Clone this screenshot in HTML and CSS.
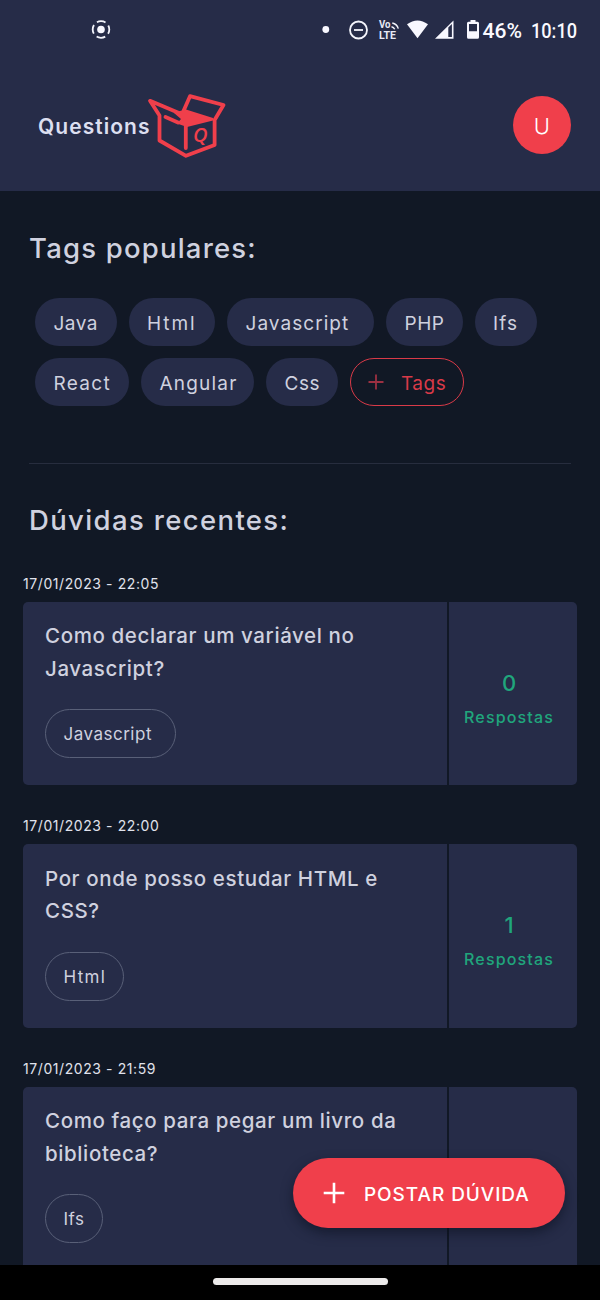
FILE: index.html
```html
<!DOCTYPE html>
<html lang="pt-BR">
<head>
<meta charset="utf-8">
<title>Questions</title>
<link rel="stylesheet" href="styles.css">
</head>
<body>
<div class="app">
  <header class="header">
    <div class="status">
      <svg class="status-icons" width="600" height="60" viewBox="0 0 600 60">
        <g fill="none" stroke="#f4f5fc" stroke-width="1.8">
          <circle cx="101" cy="29.500" r="8.300" stroke-dasharray="9 4.04" stroke-dashoffset="4.500"/>
          <circle cx="358.500" cy="30" r="8.500"/>
          <path d="M354 30h9"/>
          <path d="M391.500 26.800a4.500 4.500 0 0 1 3.200 2.500M392.300 23a8 8 0 0 1 6 5.600" stroke-width="1.400"/>
        </g>
        <g fill="#f8f8ff">
          <circle cx="101" cy="29.500" r="3.800"/>
          <circle cx="325.800" cy="29.500" r="3.400"/>
          <path d="M407 24.300Q417.500 16.500 428 24.300L417.500 38.300Z"/>
          <path fill-rule="evenodd" d="M435 38.700L453.500 20.500V38.700ZM448.300 27.500V37H451.900V24Z"/>
          <path fill-rule="evenodd" d="M470.500 20h5v1.800h2q1.500 0 1.500 1.500v14q0 1.500-1.500 1.500h-9q-1.500 0-1.500-1.500v-14q0-1.500 1.500-1.500h2ZM469 24v7.200h8V24Z"/>
        </g>
        <g class="volte">
          <text x="379" y="28" textLength="11.500" lengthAdjust="spacingAndGlyphs">Vo</text>
          <text x="379" y="38.500" textLength="17" lengthAdjust="spacingAndGlyphs">LTE</text>
        </g>
        <g class="status-text">
          <text x="482.500" y="38" textLength="39.500" lengthAdjust="spacingAndGlyphs">46%</text>
          <text x="531" y="38" textLength="46" lengthAdjust="spacingAndGlyphs">10:10</text>
        </g>
      </svg>
    </div>
    <div class="topbar">
      <div class="brand">
        <span class="brand-name">Questions</span>
        <svg class="brand-box" width="80" height="70" viewBox="146 90 80 70">
          <g fill="none" stroke="#f03f4b" stroke-width="3.800" stroke-linejoin="round" stroke-linecap="round">
            <path d="M183.500 111L190 96.200L223.500 105L214.600 120V145L186 155.800L159.500 140.500V115.500L150 100.800L179 113"/>
            <path d="M185.800 126V148M165.500 117L178 122.500"/>
          </g>
          <path fill="#f03f4b" d="M178 111.500L186 109.500L213 118V120.500L187 127L177 123.500L181 119L174 113Z"/>
          <text class="brand-q" x="193" y="141.500">Q</text>
        </svg>
      </div>
      <div class="avatar">U</div>
    </div>
  </header>

  <main class="content">
    <section class="popular">
      <h1 class="heading">Tags populares:</h1>
      <div class="tags">
        <span class="tag w-java">Java</span><span class="tag w-html">Html</span><span class="tag w-js">Javascript</span><span class="tag w-php">PHP</span><span class="tag w-ifs">Ifs</span>
        <span class="tag w-react">React</span><span class="tag w-angular">Angular</span><span class="tag w-css">Css</span>
        <span class="tag tag-more"><svg width="16" height="16" viewBox="0 0 16 16"><path d="M8 .5v15M.5 8h15"/></svg>Tags</span>
      </div>
    </section>
    <section class="recent">
      <h2 class="heading recent-heading">Dúvidas recentes:</h2>
      <article class="question">
        <time class="date">17/01/2023 - 22:05</time>
        <div class="card">
          <div class="card-main">
            <p class="title">Como declarar um variável no<br>Javascript?</p>
            <span class="chip c-js">Javascript</span>
          </div>
          <div class="card-side"><b class="count">0</b><span class="label">Respostas</span></div>
        </div>
      </article>
      <article class="question">
        <time class="date">17/01/2023 - 22:00</time>
        <div class="card">
          <div class="card-main">
            <p class="title">Por onde posso estudar HTML e<br>CSS?</p>
            <span class="chip c-html">Html</span>
          </div>
          <div class="card-side"><b class="count">1</b><span class="label">Respostas</span></div>
        </div>
      </article>
      <article class="question">
        <time class="date">17/01/2023 - 21:59</time>
        <div class="card">
          <div class="card-main">
            <p class="title">Como faço para pegar um livro da<br>biblioteca?</p>
            <span class="chip c-ifs">Ifs</span>
          </div>
          <div class="card-side"></div>
        </div>
      </article>
    </section>
  </main>
  <button class="fab"><svg width="22" height="22" viewBox="0 0 22 22"><path d="M11 .7v20.600M.7 11h20.600"/></svg><span>POSTAR DÚVIDA</span></button>
  <footer class="navbar"><div class="handle"></div></footer>
</div>
</body>
</html>
```
FILE: styles.css
```css
* { box-sizing: border-box; }
body { margin: 0; background: #111825; font-family: Inter, "Liberation Sans", sans-serif; color: #cfd1df; }
.app { position: relative; display: flex; flex-direction: column; width: 600px; height: 1300px; overflow: hidden; }
.header { flex: none; height: 191px; background: #262c48; }
.status { height: 60px; }
.status-icons { display: block; }
.volte { font: 700 10px Roboto, sans-serif; fill: #e8eaf6; }
.status-text { font: 500 21px Roboto, sans-serif; fill: #fafaff; }
.topbar { display: flex; justify-content: space-between; align-items: center; height: 130px; padding: 0 29px 0 38px; }
.brand { display: flex; align-items: center; }
.brand-name { width: 108px; padding-top: 3px; font-size: 21px; font-weight: 600; letter-spacing: 1.050px; color: #dcdff0; white-space: nowrap; }
.brand-q { font: italic 600 20px "Open Sans", sans-serif; fill: #f03f4b; }
.avatar { display: flex; align-items: center; justify-content: center; width: 58.500px; height: 58.500px; padding-top: 2px; border-radius: 50%; background: #f03f4b; color: #fff; font-size: 22px; font-weight: 300; }
.content { flex: 1; min-height: 0; overflow: hidden; }
.popular { height: 273px; margin: 0 29px; padding: 37px 0 0; border-bottom: 1px solid #272d3e; }
.heading { margin: 0; font-size: 27.500px; line-height: 40px; font-weight: 500; letter-spacing: 1.200px; white-space: nowrap; }
.tags { display: flex; flex-wrap: wrap; gap: 11.500px 12px; margin-top: 29.500px; padding-left: 6px; }
.tag { display: flex; align-items: center; height: 48.500px; padding: 3px 0 0 18.500px; border-radius: 25px; background: #262c48; font-size: 19px; letter-spacing: .5px; white-space: nowrap; }
.w-java { width: 81.500px; }
.w-html { width: 86.500px; letter-spacing: 1.900px; }
.w-js { width: 147px; letter-spacing: 1.050px; }
.w-php { width: 76.500px; }
.w-ifs { width: 62px; letter-spacing: 1.200px; }
.w-react { width: 94px; letter-spacing: 1.300px; }
.w-angular { width: 113px; letter-spacing: 1.200px; }
.w-css { width: 72px; }
.tag-more { width: 113.500px; gap: 17px; padding-left: 17px; border: 1px solid #d93a48; background: none; color: #d93a48; }
.tag-more svg { margin-top: -3px; stroke: #9c3042; stroke-width: 1.800; }
.recent { padding: 36px 23px 0; }
.recent-heading { padding-left: 6px; letter-spacing: 1.360px; }
.recent-heading + .question { margin-top: 31.500px; }
.question { height: 242.600px; }
.date { display: block; height: 30px; line-height: 24px; font-size: 14px; letter-spacing: .580px; color: #e0e2ec; }
.card { display: flex; gap: 2px; height: 183.500px; }
.card-main { width: 424px; padding: 18.500px 22px; border-radius: 5px 0 0 5px; background: #262c48; }
.title { margin: 0 0 24px; font-size: 20.500px; font-weight: 500; line-height: 32.500px; letter-spacing: .610px; white-space: nowrap; }
.chip { display: flex; align-items: center; height: 49px; padding: 1px 0 0 17.500px; border: 1px solid #596078; border-radius: 25px; font-size: 17px; letter-spacing: .500px; }
.c-js { width: 131px; }
.c-html { width: 79px; letter-spacing: 1.300px; }
.c-ifs { width: 58px; }
.card-side { display: flex; flex-direction: column; align-items: center; flex: 1; padding: 64px 8px 0 0; border-radius: 0 5px 5px 0; background: #262c48; color: #20a67c; }
.count { font-size: 22px; font-weight: 500; line-height: 34px; }
.label { font-size: 16px; font-weight: 500; line-height: 34px; letter-spacing: 1.150px; }
.fab { position: absolute; left: 293px; top: 1158px; display: flex; align-items: center; gap: 19px; width: 272px; height: 70px; padding: 0 0 0 30px; border: 0; border-radius: 35px; background: #f03f4b; box-shadow: 0 5px 12px rgba(10, 14, 30, .55); color: #fff; font: 500 19px Inter, sans-serif; letter-spacing: .930px; white-space: nowrap; }
.fab span { padding-top: 2px; }
.fab svg { stroke: #fff; stroke-width: 2.600; }
.navbar { display: flex; align-items: flex-start; justify-content: center; flex: none; height: 35px; padding-top: 13px; background: #000; }
.handle { width: 175px; height: 7px; border-radius: 4px; background: #eceaea; }
```
